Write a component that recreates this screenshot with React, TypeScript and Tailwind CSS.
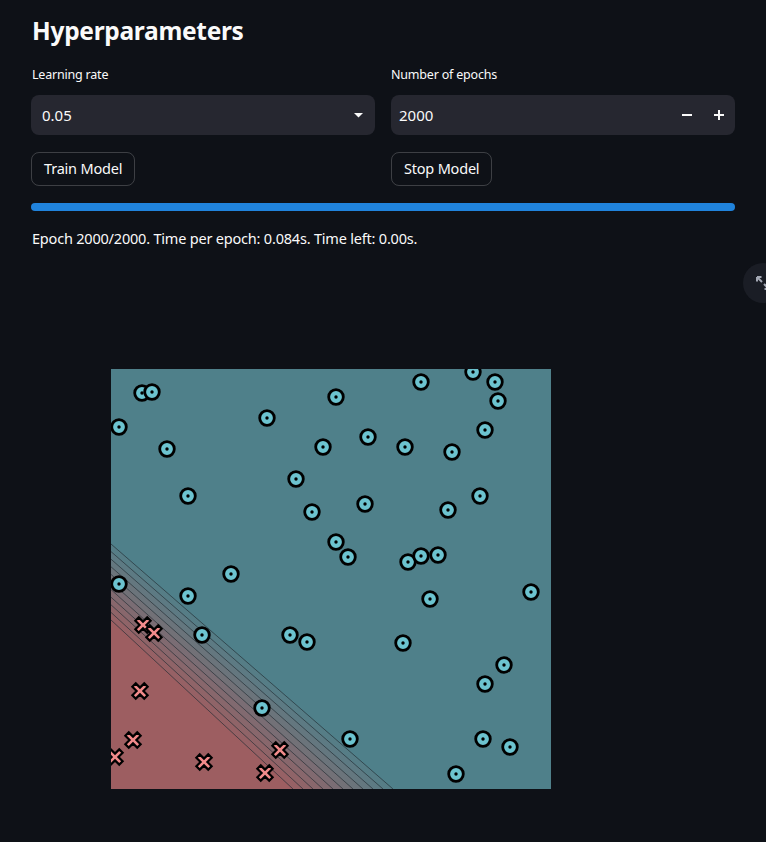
// data points read off the scatter plot (page coordinates)
const blue: number[][] = [
  [142, 393], [152, 392], [119, 427], [167, 449], [188, 496], [267, 418], [336, 397], [421, 382],
  [473, 372], [495, 382], [498, 401], [485, 430], [368, 437], [323, 447], [405, 447], [452, 452],
  [296, 479], [480, 496], [365, 504], [312, 512], [448, 510], [336, 542], [348, 557], [408, 562],
  [421, 556], [438, 555], [231, 574], [119, 584], [188, 596], [531, 592], [430, 599], [202, 635],
  [290, 635], [307, 642], [403, 643], [504, 665], [485, 684], [262, 708], [350, 739], [483, 739],
  [510, 747], [456, 774],
];
const red: number[][] = [
  [143, 625], [154, 633], [140, 691], [133, 740], [115, 757], [204, 762], [280, 750], [265, 773],
];

const TEAL = [79, 128, 138];
const RED = [157, 94, 97];
const mix = (t: number) =>
  `rgb(${TEAL.map((c, i) => Math.round(c + (RED[i] - c) * t)).join(",")})`;

const N = 11;
const lineY = (i: number) => 544 + 7.6 * i; // where contour i meets the left edge
const lineX = (i: number) => 393 - 10 * i; // where contour i meets the bottom edge

// X marker as a rotated plus polygon
const w = 2.4;
const L = 8.4;
const cross = [
  [-w, -L], [w, -L], [w, -w], [L, -w], [L, w], [w, w], [w, L], [-w, L], [-w, w], [-L, w], [-L, -w], [-w, -w],
]
  .map((p) => p.join(","))
  .join(" ");

function Plot() {
  return (
    <svg width={440} height={420} viewBox="111 369 440 420" className="block">
      <rect x={111} y={369} width={440} height={420} fill={mix(0)} />
      {Array.from({ length: N - 1 }, (_, k) => (
        <polygon
          key={k}
          points={`111,${lineY(k)} ${lineX(k)},789 ${lineX(k + 1)},789 111,${lineY(k + 1)}`}
          fill={mix((k + 1) / N)}
        />
      ))}
      <polygon points={`111,${lineY(N - 1)} ${lineX(N - 1)},789 111,789`} fill={mix(1)} />
      {Array.from({ length: N }, (_, i) => (
        <line key={i} x1={111} y1={lineY(i)} x2={lineX(i)} y2={789} stroke="rgba(20,20,25,0.5)" strokeWidth={1} />
      ))}
      {blue.map(([x, y], i) => (
        <g key={i}>
          <circle cx={x} cy={y} r={7.3} fill="#6cc3cf" stroke="#000" strokeWidth={2.8} />
          <circle cx={x} cy={y} r={1.7} fill="#000" />
        </g>
      ))}
      {red.map(([x, y], i) => (
        <polygon
          key={i}
          points={cross}
          transform={`translate(${x} ${y}) rotate(45)`}
          fill="#f28b8b"
          stroke="#000"
          strokeWidth={2.2}
          strokeLinejoin="miter"
        />
      ))}
    </svg>
  );
}

export default function App() {
  return (
    <div
      className="relative min-h-screen w-full overflow-hidden bg-[#0e1117] text-[#fafafa]"
      style={{ fontFamily: '"Noto Sans", sans-serif' }}
    >
      <div className="px-[31px] pt-[14px] pb-10">
        <h2 className="text-[24.5px] font-bold leading-[34px] tracking-[-0.3px] pl-[1px]">Hyperparameters</h2>

        <div className="mt-[17px] grid grid-cols-2 gap-4">
          <div>
            <label className="block text-[12.5px] leading-[20px] tracking-[-0.2px] pl-[1px]">Learning rate</label>
            <div className="mt-[10px] flex h-10 items-center justify-between rounded-lg bg-[#262730] pl-[11px] pr-[12px] text-[15px]">
              <span>0.05</span>
              <svg width="9" height="5" viewBox="0 0 9 5">
                <path d="M0 0 L9 0 L4.5 4.5 Z" fill="#fafafa" />
              </svg>
            </div>
            <button className="mt-[17px] h-[34px] rounded-lg border border-[rgba(250,250,250,0.2)] px-[12px] text-[14.5px] tracking-[-0.2px]">
              Train Model
            </button>
          </div>
          <div>
            <label className="block text-[12.5px] leading-[20px] tracking-[-0.2px]">Number of epochs</label>
            <div className="mt-[10px] flex h-10 items-center rounded-lg bg-[#262730] pl-[8px] text-[15px]">
              <span className="flex-1">2000</span>
              <span className="flex h-10 w-8 items-center justify-center">
                <svg width="10" height="10" viewBox="0 0 10 10">
                  <rect x="0" y="4" width="10" height="2" fill="#fafafa" />
                </svg>
              </span>
              <span className="flex h-10 w-8 items-center justify-center">
                <svg width="10" height="10" viewBox="0 0 10 10">
                  <rect x="0" y="4" width="10" height="2" fill="#fafafa" />
                  <rect x="4" y="0" width="2" height="10" fill="#fafafa" />
                </svg>
              </span>
            </div>
            <button className="mt-[17px] h-[34px] rounded-lg border border-[rgba(250,250,250,0.2)] px-[12px] text-[14.5px] tracking-[-0.2px]">
              Stop Model
            </button>
          </div>
        </div>

        <div className="mt-[17px] h-2 w-full rounded-full bg-[#2083dc]" />

        <p className="mt-[15px] text-[14.5px] leading-[24px] tracking-[-0.2px] pl-[1px]">
          Epoch 2000/2000. Time per epoch: 0.084s. Time left: 0.00s.
        </p>

        <div className="mt-[119px] pl-[80px]">
          <Plot />
        </div>
      </div>

      {/* fullscreen toggle, mostly off the right edge */}
      <div className="absolute left-[743px] top-[263px] flex h-10 w-10 items-center justify-center rounded-full bg-[#1a1d25]">
        <svg width="16" height="16" viewBox="0 0 16 16" fill="none" stroke="#a3a8b4" strokeWidth="2">
          <path d="M2 2 L7 7" />
          <path d="M2 2 L2 6.5 M2 2 L6.5 2" />
          <path d="M14 14 L9 9" />
          <path d="M14 14 L14 9.5 M14 14 L9.5 14" />
        </svg>
      </div>
    </div>
  );
}
